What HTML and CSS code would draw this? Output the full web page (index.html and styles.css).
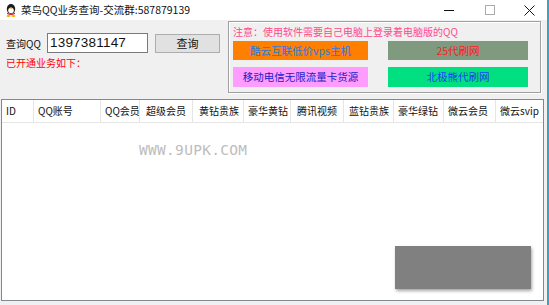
FILE: index.html
```html
<!DOCTYPE html>
<html lang="zh">
<head>
<meta charset="utf-8">
<link rel="stylesheet" href="styles.css">
</head>
<body>
<div class="window">
  <div class="titlebar">
    <svg class="appicon" width="14" height="14" viewBox="0 0 14 14">
      <ellipse cx="7" cy="6" rx="4.2" ry="5" fill="#1a1a1a"/>
      <ellipse cx="7" cy="7.5" rx="2.8" ry="2.8" fill="#fff"/>
      <path d="M3 9.5 Q7 12 11 9.5 L11 11 Q7 13 3 11 Z" fill="#e02020"/>
      <ellipse cx="4.5" cy="13" rx="2" ry="1" fill="#f0b000"/>
      <ellipse cx="9.5" cy="13" rx="2" ry="1" fill="#f0b000"/>
      <ellipse cx="7" cy="5" rx="1.3" ry="0.8" fill="#f0b000"/>
    </svg>
    <span class="title">菜鸟QQ业务查询-交流群:587879139</span>
    <div class="controls">
      <span class="ctl min"></span>
      <span class="ctl max"></span>
      <svg class="ctl close" width="11" height="11" viewBox="0 0 11 11"><path d="M0.5 0.5 L10.5 10.5 M10.5 0.5 L0.5 10.5" stroke="#111" stroke-width="1"/></svg>
    </div>
  </div>
  <div class="top">
    <div class="query">
      <div class="qrow">
        <span class="qlabel">查询QQ</span>
        <div class="qinput">1397381147</div>
        <div class="qbtn">查询</div>
      </div>
      <div class="opened">已开通业务如下：</div>
    </div>
    <div class="group">
      <div class="notice">注意：使用软件需要自己电脑上登录着电脑版的QQ</div>
      <div class="links">
        <div class="link orange">酷云互联低价vps主机</div>
        <div class="link sage">25代刷网</div>
        <div class="link pink">移动电信无限流量卡货源</div>
        <div class="link green">北极熊代刷网</div>
      </div>
    </div>
  </div>
  <div class="listwrap">
    <div class="list">
      <div class="header">
        <div class="col c1">ID</div>
        <div class="col c2">QQ账号</div>
        <div class="col c3">QQ会员</div>
        <div class="col c4">超级会员</div>
        <div class="col c5">黄钻贵族</div>
        <div class="col c6">豪华黄钻</div>
        <div class="col c7">腾讯视频</div>
        <div class="col c8">蓝钻贵族</div>
        <div class="col c9">豪华绿钻</div>
        <div class="col c10">微云会员</div>
        <div class="col c11">微云svip</div>
      </div>
      <div class="watermark">WWW.9UPK.COM</div>
      <div class="shadowbox"></div>
    </div>
  </div>
</div>
</body>
</html>
```
FILE: styles.css
```css
* { box-sizing: border-box; }
html, body { margin: 0; padding: 0; }
body {
  width: 549px;
  height: 305px;
  overflow: hidden;
  background: #f0f0f0;
  font-family: "Noto Sans CJK SC", "Noto Sans", sans-serif;
}
.window {
  width: 549px;
  height: 305px;
  display: flex;
  flex-direction: column;
  background: #f0f0f0;
  border-right: 2px solid #3aa3c4;
}
.titlebar {
  height: 20px;
  flex: none;
  background: #fff;
  display: flex;
  align-items: center;
  padding-left: 4px;
}
.appicon { flex: none; }
.title {
  margin-left: 3px;
  font-size: 10.5px;
  color: #111;
  line-height: 20px;
}
.controls {
  margin-left: auto;
  display: flex;
  align-items: center;
  height: 20px;
}
.ctl { display: block; flex: none; }
.min {
  width: 10px;
  height: 1px;
  background: #111;
  margin-right: 31px;
}
.max {
  width: 10px;
  height: 10px;
  border: 1px solid #aaa;
  margin-right: 29px;
}
.close { margin-right: 12px; }

.top {
  height: 79px;
  flex: none;
  display: flex;
  padding-top: 1px;
}
.query {
  width: 228px;
  padding-left: 6px;
  padding-top: 12px;
}
.qrow {
  display: flex;
  align-items: center;
}
.qlabel {
  font-size: 10px;
  color: #111;
  width: 41px;
}
.qinput {
  width: 101px;
  height: 20px;
  background: #fff;
  border: 1px solid #7a7a7a;
  font-family: "Liberation Sans", sans-serif;
  font-size: 13.5px;
  line-height: 18px;
  padding-left: 2px;
  color: #111;
  letter-spacing: 0.2px;
}
.qbtn {
  margin-left: 7px;
  width: 65px;
  height: 19px;
  background: #e1e1e1;
  border: 1px solid #adadad;
  font-size: 11px;
  line-height: 17px;
  text-align: center;
  color: #111;
}
.opened {
  margin-top: 1px;
  font-size: 10px;
  color: #ff0000;
  line-height: 18px;
}
.group {
  width: 313px;
  height: 72px;
  border: 1px solid #a0a0a0;
  box-shadow: inset 1px 1px 0 #fff, 1px 1px 0 #fff;
  padding: 2px 0 0 4px;
}
.notice {
  font-size: 10px;
  color: #ff4a8a;
  line-height: 16px;
  height: 17px;
}
.links {
  display: grid;
  grid-template-columns: 135px 140px;
  column-gap: 20px;
  row-gap: 7px;
}
.link {
  height: 19px;
  font-size: 10.5px;
  line-height: 19px;
  text-align: center;
  white-space: nowrap;
}
.orange { background: #ff8000; color: #2a78e8; }
.sage { background: #809a80; color: #ff2020; }
.pink { background: #ff9cff; color: #2020c8; height: 20px; line-height: 20px; }
.green { background: #00e080; color: #1a40ff; height: 20px; line-height: 20px; }

.listwrap {
  flex: 1;
  padding: 0 3px 4px 1px;
}
.list {
  position: relative;
  height: 100%;
  background: #fff;
  border: 1px solid #828790;
}
.header {
  display: flex;
  height: 23px;
  border-bottom: 1px solid #e5e5e5;
}
.col {
  font-size: 10px;
  line-height: 22px;
  color: #111;
  padding-left: 4px;
  border-right: 1px solid #e5e5e5;
  white-space: nowrap;
  overflow: hidden;
}
.c1 { width: 32px; }
.c2 { width: 67px; }
.c3 { width: 39px; }
.c4 { width: 53px; padding-left: 6px; }
.c5 { width: 51px; padding-left: 6px; }
.c6 { width: 47px; }
.c7 { width: 53px; padding-left: 6px; }
.c8 { width: 50px; padding-left: 5px; }
.c9 { width: 50px; }
.c10 { width: 52px; }
.c11 { width: 47px; border-right: none; }
.watermark {
  position: absolute;
  left: 137px;
  top: 42px;
  font-family: "DejaVu Sans Mono", monospace;
  font-size: 14.5px;
  color: #bdbdbd;
  letter-spacing: 0.3px;
}
.shadowbox {
  position: absolute;
  left: 393px;
  top: 146px;
  width: 136px;
  height: 43px;
  background: #808080;
  box-shadow: 1px 2px 3px rgba(0,0,0,0.35);
}
```
